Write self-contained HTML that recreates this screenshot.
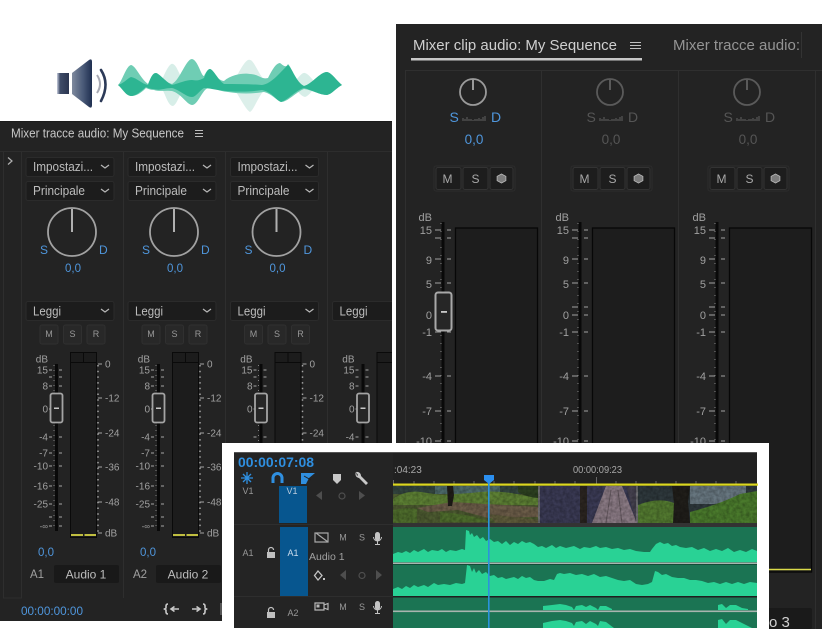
<!DOCTYPE html>
<html><head><meta charset="utf-8"><style>
html,body{margin:0;padding:0;background:#fff;width:822px;height:629px;overflow:hidden}
svg{display:block;position:absolute;left:0;top:0;filter:blur(.3px)}
text{font-family:"Liberation Sans",sans-serif;fill:#bdbdbd;font-size:12px}
.m{text-anchor:middle}.e{text-anchor:end}
.b{fill:#4f96dc}
.t{font-size:10px;fill:#a0a0a0}
.d{fill:#555}
.l{font-size:9px;fill:#989898}
.dt{font-size:13px}
</style></head><body>
<svg width="822" height="629" viewBox="0 0 822 629" xmlns="http://www.w3.org/2000/svg">
<defs>
<filter id="nz" x="0" y="0" width="100%" height="100%"><feTurbulence type="fractalNoise" baseFrequency="0.3" numOctaves="2" seed="4"/><feColorMatrix values="0 0 0 0 0  0 0 0 0 0  0 0 0 0 0  1.6 0 0 0 -0.45"/></filter>
<linearGradient id="cone" x1="0" y1="0" x2="1" y2="0"><stop offset="0" stop-color="#7f8a9e"/><stop offset=".55" stop-color="#4a5a78"/><stop offset="1" stop-color="#1f2f50"/></linearGradient>
<linearGradient id="bx" x1="0" y1="0" x2="1" y2="0"><stop offset="0" stop-color="#c8cede"/><stop offset=".25" stop-color="#3f4c68"/><stop offset="1" stop-color="#2b3550"/></linearGradient>

<g id="dd"><rect x="26" y="0.5" width="88" height="19" rx="2" fill="#1c1c1c" stroke="#2b2b2b"/><path d="M101 8l4 3 4-3" fill="none" stroke="#b8b8b8" stroke-width="1.2"/></g>

<g id="strip">
 <use href="#dd" y="157"/><use href="#dd" y="181"/>
 <circle cx="72" cy="232" r="24" fill="none" stroke="#a2a2a2" stroke-width="1.8"/>
 <rect x="71" y="209" width="2" height="23" fill="#b0b0b0"/>
 <use href="#dd" y="301"/>
 <g fill="#282828" stroke="#303030"><rect x="40" y="325" width="18" height="19" rx="2"/><rect x="63.500" y="325" width="18" height="19" rx="2"/><rect x="87" y="325" width="18" height="19" rx="2"/></g>
 <rect x="55" y="364" width="3" height="167" fill="#090909"/>
 <path d="M49 370h3M49 377h3M49 386h3M49 409h3M49 437h3M49 453h3M49 466h3M49 486h3M49 504h3M49 517h3M49 526h3M59 370h3M59 377h3M59 386h3M59 409h3M59 437h3M59 453h3M59 466h3M59 486h3M59 504h3M59 517h3M59 526h3" stroke="#a4a4a4" stroke-width="1"/>
 <path d="M54 365V528" stroke="#808080" stroke-width="1" stroke-dasharray="1 4"/>
 <rect x="50.500" y="393.500" width="12" height="29" rx="2" fill="#262626" stroke="#a4a4a4" stroke-width="1.800"/>
 <rect x="54" y="407.500" width="5" height="1.500" fill="#c8c8c8"/>
 <rect x="70.500" y="352.500" width="26" height="185" fill="#1c1c1c" stroke="#0a0a0a"/>
 <path d="M71 362.500H96M83.500 352V362" stroke="#0a0a0a" stroke-width="1"/>
 <path d="M71 535H83M84.500 535H96" stroke="#d7d545" stroke-width="1.800"/>
 <path d="M98 365V533" stroke="#a4a4a4" stroke-width="1.500" stroke-dasharray="1.500 4.200"/>
 <path d="M98 364h4M98 398h4M98 433h4M98 467h4M98 502h4M98 533h4" stroke="#a4a4a4"/>
 <rect x="54" y="565" width="65" height="18" rx="2" fill="#191919"/>
</g>

<g id="ticks">
 <path d="M441 223V443" stroke="#888" stroke-dasharray="1 7"/>
 <rect x="441.500" y="222" width="3" height="222" fill="#090909"/>
 <path d="M435 230h6M447 230h4M435 238h6M447 238h4M435 259h6M447 259h4M435 283h6M447 283h4M435 315h6M447 315h4M435 332h6M447 332h4M435 376h6M447 376h4M435 411h6M447 411h4M435 441h6M447 441h4" stroke="#a2a2a2"/>
 <rect x="455.500" y="228" width="82" height="344" fill="#1d1d1d" stroke="#070707" stroke-width="1.300"/>
 <path d="M456 569.500H537" stroke="#dcdc4a" stroke-width="1.500"/>
</g>
<g id="btn3">
 <rect x="434" y="166" width="81" height="25" rx="2" fill="#222" stroke="#2c2c2c"/>
 <g fill="#1d1d1d" stroke="#333"><rect x="436" y="167.500" width="25" height="22" rx="2"/><rect x="463" y="167.500" width="25" height="22" rx="2"/><rect x="490" y="167.500" width="23" height="22" rx="2"/></g>
 <path d="M501.500 174l4.400 2.400v4.200l-4.400 2.400-4.400-2.400v-4.200z" fill="#7c7c7c" stroke="#b8b8b8" stroke-width=".8"/>
</g>
<g id="sdt"><path d="M463 121v-3M465 121v-2M467 121v-4M469 121v-2M471 121v-2M473 121v-1M475 121v-2M477 121v-2M479 121v-3M481 121v-2M483 121v-4M485 121v-5" stroke="#606060" stroke-width="1"/></g>
</defs>

<!-- white page -->
<rect width="822" height="629" fill="#fff"/>

<!-- speaker -->
<rect x="57" y="73" width="12" height="21" fill="url(#bx)"/>
<path d="M72 73L89 60q3-2 3 2V105q0 4-3 2L72 94Z" fill="url(#cone)"/>
<path d="M97 75q6 9 0 18" fill="none" stroke="#a8aab4" stroke-width="2"/>
<path d="M101 70q9 14 0 31" fill="none" stroke="#2c3a58" stroke-width="2.600" stroke-linecap="round"/>

<!-- waveform -->
<path d="M160 85C165 72 170 62 173 64C178 66 180 80 188 85C180 90 178 104 173 106C168 106 166 95 160 85Z" fill="#d7eee8"/>
<path d="M232 85C240 70 246 58 250 60C254 60 258 74 268 85C258 96 254 110 250 112C246 110 240 98 232 85Z" fill="#dcefea"/>
<path d="M292 85C298 78 302 72 305 73C309 74 312 80 318 85C312 90 309 96 305 97C301 96 298 92 292 85Z" fill="#d7eee8"/>
<path d="M118 85C122 82 126 66 131 65C136 66 140 78 148 84C150 80 152 73 156 73C160 74 164 82 172 84C180 80 186 59 192 59C198 60 201 76 204 76C206 72 208 69 210 69C214 70 216 80 224 81C232 74 244 73 250 74C258 74 262 80 268 78C272 70 276 63 280 63C284 66 286 68 288 64C292 68 296 82 304 86C312 84 320 72 327 72C332 73 336 80 342 85C336 88 332 94 327 95C320 95 312 90 304 89C296 92 288 102 281 102C276 100 272 94 264 92C252 94 240 94 228 92C218 91 212 87 208 88C202 90 198 105 192 105C186 104 182 94 172 91C166 90 160 92 154 90C150 90 146 88 146 88C140 94 136 96 131 96C126 96 122 88 118 85Z" fill="#6fcdb4"/>
<path d="M118 85C124 83 128 78 131 77C137 78 142 84 148 85C150 80 152 73 156 73C160 74 166 82 172 85C180 83 186 80 192 80C198 81 200 80 204 78C206 72 208 69 210 69C214 70 218 80 224 84C236 84 250 84 262 85C272 84 282 70 288 65C292 68 296 82 304 86C312 84 320 72 327 72C332 73 336 80 342 85C336 88 332 94 327 95C320 95 312 90 304 88C296 90 288 100 281 102C276 100 272 92 262 90C250 92 236 92 226 91C216 90 208 88 204 88C200 90 196 97 192 97C186 97 180 90 172 88C164 88 160 91 154 89C150 89 148 88 146 87C140 92 136 96 131 96C126 96 122 88 118 85Z" fill="#2db592"/>

<!-- LEFT PANEL -->
<rect x="0" y="121" width="392" height="500" fill="#232323"/>
<rect x="0" y="121" width="392" height="1" fill="#1c1c1c"/>
<path d="M0 151.500H392" stroke="#2d2d2d"/>
<path d="M3.500 152V598H22M21.500 152V598M123.500 152V598M225.500 152V598M327.500 152V598" stroke="#2e2e2e" fill="none"/>
<path d="M8 157.500l4 3.500-4 3.500" fill="none" stroke="#b0b0b0" stroke-width="1.200"/>
<text x="11" y="137.500" style="font-size:12.500px;fill:#c8c8c8" textLength="173" lengthAdjust="spacingAndGlyphs">Mixer tracce audio: My Sequence</text>
<path d="M195 130.500h8M195 133.500h8M195 136.500h8" stroke="#bdbdbd" stroke-width="1"/>

<use href="#strip"/>
<use href="#strip" x="102"/>
<use href="#strip" x="204.500"/>
<clipPath id="c4"><rect x="328" y="152" width="64" height="470"/></clipPath>
<g clip-path="url(#c4)"><g transform="translate(306.500 0)">
 <rect x="26" y="301.500" width="88" height="19" rx="2" fill="#1c1c1c" stroke="#2b2b2b"/>
 <rect x="55" y="364" width="3" height="167" fill="#090909"/>
 <path d="M49 370h3M49 377h3M49 386h3M49 409h3M49 437h3M49 453h3M49 466h3M49 486h3M49 504h3M59 370h3M59 377h3M59 386h3M59 409h3M59 437h3M59 453h3M59 466h3M59 486h3M59 504h3" stroke="#a4a4a4"/>
 <rect x="50.500" y="393.500" width="12" height="29" rx="2" fill="#262626" stroke="#a4a4a4" stroke-width="1.800"/>
 <rect x="54" y="407.500" width="5" height="1.500" fill="#c8c8c8"/>
 <rect x="70.500" y="352.500" width="26" height="185" fill="#1c1c1c" stroke="#0a0a0a"/>
 <path d="M71 362.500H96" stroke="#0a0a0a"/>
 <text class="dt" x="33" y="315.500" textLength="28" lengthAdjust="spacingAndGlyphs">Leggi</text>
 <text class="t e" x="48" y="362.500">dB</text>
 <text class="t e" x="48" y="373.500">15</text><text class="t e" x="48" y="389.500">8</text><text class="t e" x="48" y="412.500">0</text><text class="t e" x="48" y="440.500">-4</text><text class="t e" x="48" y="456.500">-7</text>
</g></g>

<!-- strip texts -->
<g>
<text class="dt" x="33" y="171" textLength="60" lengthAdjust="spacingAndGlyphs">Impostazi...</text><text class="dt" x="33" y="195" textLength="52" lengthAdjust="spacingAndGlyphs">Principale</text>
<text class="b" x="40" y="254" style="font-size:12px">S</text><text class="b" x="99" y="254" style="font-size:12px">D</text><text class="b m" x="73" y="272" style="font-size:11.500px">0,0</text>
<text class="dt" x="33" y="315.500" textLength="28" lengthAdjust="spacingAndGlyphs">Leggi</text>
<text class="l m" x="49" y="337">M</text><text class="l m" x="72.500" y="337">S</text><text class="l m" x="96" y="337">R</text>
<text class="t e" x="48" y="362.500">dB</text><text class="t e" x="48" y="373.500">15</text><text class="t e" x="48" y="389.500">8</text><text class="t e" x="48" y="412.500">0</text><text class="t e" x="48" y="440.500">-4</text><text class="t e" x="48" y="456.500">-7</text><text class="t e" x="48" y="469.500">-10</text><text class="t e" x="48" y="489.500">-16</text><text class="t e" x="48" y="507.500">-25</text><text class="t e" x="48" y="529" style="font-size:8px">-∞</text>
<text class="t" x="105" y="367.500">0</text><text class="t" x="105" y="401.500">-12</text><text class="t" x="105" y="436.500">-24</text><text class="t" x="105" y="470.500">-36</text><text class="t" x="105" y="505.500">-48</text><text class="t" x="105" y="536.500">dB</text>
<text class="b" x="38" y="556" style="font-size:11.500px">0,0</text>
<text x="30" y="578" style="font-size:11.500px;fill:#a0a0a0">A1</text><text class="m" x="86" y="578.500" style="font-size:12px">Audio 1</text>
</g>
<g transform="translate(102 0)">
<text class="dt" x="33" y="171" textLength="60" lengthAdjust="spacingAndGlyphs">Impostazi...</text><text class="dt" x="33" y="195" textLength="52" lengthAdjust="spacingAndGlyphs">Principale</text>
<text class="b" x="40" y="254" style="font-size:12px">S</text><text class="b" x="99" y="254" style="font-size:12px">D</text><text class="b m" x="73" y="272" style="font-size:11.500px">0,0</text>
<text class="dt" x="33" y="315.500" textLength="28" lengthAdjust="spacingAndGlyphs">Leggi</text>
<text class="l m" x="49" y="337">M</text><text class="l m" x="72.500" y="337">S</text><text class="l m" x="96" y="337">R</text>
<text class="t e" x="48" y="362.500">dB</text><text class="t e" x="48" y="373.500">15</text><text class="t e" x="48" y="389.500">8</text><text class="t e" x="48" y="412.500">0</text><text class="t e" x="48" y="440.500">-4</text><text class="t e" x="48" y="456.500">-7</text><text class="t e" x="48" y="469.500">-10</text><text class="t e" x="48" y="489.500">-16</text><text class="t e" x="48" y="507.500">-25</text><text class="t e" x="48" y="529" style="font-size:8px">-∞</text>
<text class="t" x="105" y="367.500">0</text><text class="t" x="105" y="401.500">-12</text><text class="t" x="105" y="436.500">-24</text><text class="t" x="105" y="470.500">-36</text><text class="t" x="105" y="505.500">-48</text><text class="t" x="105" y="536.500">dB</text>
<text class="b" x="38" y="556" style="font-size:11.500px">0,0</text>
<text x="31" y="578" style="font-size:11.500px;fill:#a0a0a0">A2</text><text class="m" x="86" y="578.500" style="font-size:12px">Audio 2</text>
</g>
<g transform="translate(204.500 0)">
<text class="dt" x="33" y="171" textLength="60" lengthAdjust="spacingAndGlyphs">Impostazi...</text><text class="dt" x="33" y="195" textLength="52" lengthAdjust="spacingAndGlyphs">Principale</text>
<text class="b" x="40" y="254" style="font-size:12px">S</text><text class="b" x="99" y="254" style="font-size:12px">D</text><text class="b m" x="73" y="272" style="font-size:11.500px">0,0</text>
<text class="dt" x="33" y="315.500" textLength="28" lengthAdjust="spacingAndGlyphs">Leggi</text>
<text class="l m" x="49" y="337">M</text><text class="l m" x="72.500" y="337">S</text><text class="l m" x="96" y="337">R</text>
<text class="t e" x="48" y="362.500">dB</text><text class="t e" x="48" y="373.500">15</text><text class="t e" x="48" y="389.500">8</text><text class="t e" x="48" y="412.500">0</text>
<text class="t" x="105" y="367.500">0</text><text class="t" x="105" y="401.500">-12</text><text class="t" x="105" y="436.500">-24</text>
</g>
<text class="b" x="21" y="615" style="font-size:11.500px" textLength="62" lengthAdjust="spacingAndGlyphs">00:00:00:00</text>
<path d="M168 604q-2 0-2 2v2l-1.500 1 1.500 1v2q0 2 2 2M171 609h8M174.500 606.500l-3.500 2.500 3.500 2.500M203 604q2 0 2 2v2l1.500 1-1.500 1v2q0 2-2 2M192 609h8M196.500 606.500l3.500 2.500-3.500 2.500" fill="none" stroke="#c8c8c8" stroke-width="1.600"/>
<rect x="220" y="603" width="3" height="12" fill="#555"/>

<!-- RIGHT PANEL -->
<rect x="396" y="24" width="426" height="605" fill="#232323"/>
<text x="413" y="50" style="font-size:14.500px;fill:#cfcfcf" textLength="204" lengthAdjust="spacingAndGlyphs">Mixer clip audio: My Sequence</text>
<path d="M630 42.500h11M630 45.500h11M630 48.500h11" stroke="#c0c0c0" stroke-width="1"/>
<rect x="411" y="58" width="231" height="2.500" fill="#c8c8c8"/>
<text x="673" y="50" style="font-size:14.500px;fill:#949494" textLength="127" lengthAdjust="spacingAndGlyphs">Mixer tracce audio:</text>
<rect x="801" y="32" width="1" height="26" fill="#333"/>
<path d="M405.500 629V70.500H822M541.500 71V629M678.500 71V629M815.500 71V629" fill="none" stroke="#2f2f2f"/>

<circle cx="473" cy="92" r="13" fill="none" stroke="#9a9a9a" stroke-width="1.800"/><rect x="472" y="79" width="2" height="11" fill="#9a9a9a"/>
<circle cx="610" cy="92" r="13" fill="none" stroke="#5a5a5a" stroke-width="1.800"/><rect x="609" y="79" width="2" height="11" fill="#5a5a5a"/>
<circle cx="747" cy="92" r="13" fill="none" stroke="#5a5a5a" stroke-width="1.800"/><rect x="746" y="79" width="2" height="11" fill="#5a5a5a"/>

<use href="#sdt"/><use href="#sdt" x="137"/><use href="#sdt" x="274"/>
<text class="b" x="449.500" y="122" style="font-size:14px">S</text><text class="b" x="491" y="122" style="font-size:14px">D</text><text class="b m" x="474" y="144" style="font-size:13.500px">0,0</text>
<text class="d" x="586.500" y="122" style="font-size:14px">S</text><text class="d" x="628" y="122" style="font-size:14px">D</text><text class="d m" x="611" y="144" style="font-size:13.500px">0,0</text>
<text class="d" x="723.500" y="122" style="font-size:14px">S</text><text class="d" x="765" y="122" style="font-size:14px">D</text><text class="d m" x="748" y="144" style="font-size:13.500px">0,0</text>

<use href="#btn3"/><use href="#btn3" x="137"/><use href="#btn3" x="274"/>
<text class="m" x="447.500" y="183" style="font-size:12px;fill:#a8a8a8">M</text><text class="m" x="475.500" y="183" style="font-size:12px;fill:#a8a8a8">S</text>
<text class="m" x="584.500" y="183" style="font-size:12px;fill:#a8a8a8">M</text><text class="m" x="612.500" y="183" style="font-size:12px;fill:#a8a8a8">S</text>
<text class="m" x="721.500" y="183" style="font-size:12px;fill:#a8a8a8">M</text><text class="m" x="749.500" y="183" style="font-size:12px;fill:#a8a8a8">S</text>

<use href="#ticks"/><use href="#ticks" x="137"/><use href="#ticks" x="274"/>
<path d="M572 307h6M584 307h4M709 307h6M721 307h4" stroke="#a2a2a2"/>
<rect x="435.500" y="292.500" width="16" height="38" rx="2.500" fill="#262626" stroke="#a8a8a8" stroke-width="2"/>
<rect x="441" y="311" width="6" height="1.800" fill="#c8c8c8"/>

<g>
<text class="t e" x="432" y="221" style="font-size:11px">dB</text><text class="t e" x="432" y="234" style="font-size:11px">15</text><text class="t e" x="432" y="264" style="font-size:11px">9</text><text class="t e" x="432" y="288" style="font-size:11px">5</text><text class="t e" x="432" y="319" style="font-size:11px">0</text><text class="t e" x="432" y="336" style="font-size:11px">-1</text><text class="t e" x="432" y="380" style="font-size:11px">-4</text><text class="t e" x="432" y="415" style="font-size:11px">-7</text><text class="t e" x="432" y="445" style="font-size:11px">-10</text>
</g>
<g transform="translate(137 0)">
<text class="t e" x="432" y="221" style="font-size:11px">dB</text><text class="t e" x="432" y="234" style="font-size:11px">15</text><text class="t e" x="432" y="264" style="font-size:11px">9</text><text class="t e" x="432" y="288" style="font-size:11px">5</text><text class="t e" x="432" y="319" style="font-size:11px">0</text><text class="t e" x="432" y="336" style="font-size:11px">-1</text><text class="t e" x="432" y="380" style="font-size:11px">-4</text><text class="t e" x="432" y="415" style="font-size:11px">-7</text><text class="t e" x="432" y="445" style="font-size:11px">-10</text>
</g>
<g transform="translate(274 0)">
<text class="t e" x="432" y="221" style="font-size:11px">dB</text><text class="t e" x="432" y="234" style="font-size:11px">15</text><text class="t e" x="432" y="264" style="font-size:11px">9</text><text class="t e" x="432" y="288" style="font-size:11px">5</text><text class="t e" x="432" y="319" style="font-size:11px">0</text><text class="t e" x="432" y="336" style="font-size:11px">-1</text><text class="t e" x="432" y="380" style="font-size:11px">-4</text><text class="t e" x="432" y="415" style="font-size:11px">-7</text><text class="t e" x="432" y="445" style="font-size:11px">-10</text>
</g>
<rect x="760" y="608" width="52" height="21" rx="2" fill="#1a1a1a"/>
<text x="769" y="627" style="font-size:15px;fill:#d0d0d0">o 3</text>

<!-- TIMELINE -->
<rect x="222" y="443" width="547" height="186" fill="#fff"/>
<rect x="234" y="452" width="523" height="176" fill="#242424"/>
<rect x="234" y="452" width="523" height="1" fill="#555"/>
<rect x="393" y="453" width="364" height="31" fill="#212121"/>
<text x="238" y="467" style="font-size:13.500px;font-weight:bold;fill:#2f8fe0" textLength="76" lengthAdjust="spacingAndGlyphs">00:00:07:08</text>
<!-- toolbar icons -->
<path d="M241 478h12M247 472v12M243 474l8 8M251 474l-8 8" stroke="#2f8fe0" stroke-width="1.300"/>
<path d="M273 483v-5a4.500 4.500 0 0 1 9 0v5" fill="none" stroke="#2f8fe0" stroke-width="3"/>
<path d="M301 473h14l-6 5 -3 6h-5z" fill="#2f8fe0"/><path d="M304 476l7 4" stroke="#202020"/>
<path d="M333 474h8v6l-4 4-4-4z" fill="#c8c8c8"/>
<path d="M356 472a4 4 0 0 0 3 6l7 7 2-2-7-7a4 4 0 0 0-5-4l2 3-1 1z" fill="#c8c8c8"/>
<!-- ruler -->
<text x="394" y="473" style="font-size:10px;fill:#a8a8a8">:04:23</text>
<text x="573" y="473" style="font-size:10px;fill:#a8a8a8" textLength="49" lengthAdjust="spacingAndGlyphs">00:00:09:23</text>
<path d="M393.500 480v4M414 481v3M434 481v3M454 481v3M474 481v3M494 481v3M514 481v3M535 481v3M555 481v3M575 481v3M596.500 477v7M616 481v3M636 481v3M656 481v3M676 481v3M696 481v3M716 481v3M736 481v3" stroke="#666"/>
<!-- video -->
<rect x="393" y="486" width="145" height="37" fill="#4c5a30"/>
<rect x="393" y="486" width="145" height="8" fill="#33453f"/>
<path d="M435 486h65v8h-65z" fill="#4d6a6a"/>
<path d="M393 499q12-9 28-7l20 3 30-2q20-3 40 0l27 5v7H393z" fill="#5d8034"/>
<path d="M417 508l35-6 86 5v10l-50 1-30-8-30 2z" fill="#6b5c48"/>
<path d="M393 510q15-3 24-1v14h-24zM440 512q30 2 50 10h-50z" fill="#4e6c2c"/>
<path d="M488 514l50 6v3h-42z" fill="#5d5a3a"/>
<path d="M447 486h6l1 9-2 11h-4z" fill="#1f1c18"/>
<path d="M518 486h20v12q-12-1-20-6z" fill="#2c4020"/>
<rect x="538" y="486" width="100" height="37" fill="#3a3a54"/>
<path d="M538 486h2v37h-2zM636 486h2v37h-2z" fill="#6e6e72"/>
<rect x="580" y="486" width="7" height="37" fill="#2b2520"/>
<path d="M606 486h16l15 37h-45z" fill="#8a7a84"/>
<path d="M611 490l-5 33M618 490l4 33" stroke="#63575e"/>
<path d="M626 486h10v36z" fill="#45414f"/>
<rect x="638" y="486" width="119" height="37" fill="#2e383c"/>
<path d="M690 486h56v18h-56z" fill="#67767f"/>
<path d="M638 505q20-8 36-2v20h-36z" fill="#537a30"/>
<path d="M690 512q30-8 50-18l17-3v32h-67z" fill="#4a7a2c"/>
<path d="M672 486h18l-2 16 2 21h-17l1-20z" fill="#201e1a"/>
<rect x="393" y="486" width="364" height="37" filter="url(#nz)" opacity=".3"/>
<rect x="393" y="523" width="364" height="4" fill="#333"/>
<rect x="393" y="483.500" width="365" height="2.200" fill="#dcd81f"/>
<!-- header -->
<path d="M234 524.500H393M234 596.500H393" stroke="#2e2e2e"/>
<rect x="279" y="486" width="28" height="37" fill="#07568f"/>
<rect x="280" y="527" width="28" height="69" fill="#07568f"/>
<text class="l m" x="248" y="494">V1</text><text class="l m" x="292" y="494" style="fill:#bcd">V1</text>
<text class="l m" x="248" y="556">A1</text><text class="l m" x="293" y="556" style="fill:#cde">A1</text>
<text class="l m" x="293" y="616">A2</text>
<text x="309" y="560" style="font-size:10.500px;fill:#a0a0a0">Audio 1</text>
<path d="M322 491v9l-6-4.500zM359 491v9l6-4.500z" fill="#4e4e4e"/><circle cx="342" cy="496" r="3" fill="none" stroke="#4e4e4e" stroke-width="1.200"/>
<!-- locks -->
<g fill="#c0c0c0"><rect x="267" y="552" width="8" height="6"/><rect x="267" y="612" width="8" height="6"/></g>
<path d="M268.500 552v-2a2.500 2.500 0 0 1 5 0M268.500 612v-2a2.500 2.500 0 0 1 5 0" fill="none" stroke="#c0c0c0" stroke-width="1.200"/>
<!-- A1 icons -->
<path d="M315 533h13v9h-13zM316 533l12 9" fill="none" stroke="#a8a8a8" stroke-width="1.200"/>
<text class="l m" x="343" y="540.500">M</text><text class="l m" x="362" y="540.500">S</text>
<text class="l m" x="343" y="610">M</text><text class="l m" x="362" y="610">S</text>
<g fill="#c4c4c4"><rect x="375" y="532" width="5" height="9" rx="2.500"/><rect x="375" y="601" width="5" height="9" rx="2.500"/></g>
<path d="M373.500 537a4 4 0 0 0 8 0M377.500 541v3M375 544.500h5M373.500 606a4 4 0 0 0 8 0M377.500 610v3M375 613.500h5" fill="none" stroke="#c4c4c4"/>
<path d="M318 571l4 4.500-4 4.500-3.500-4.500z" fill="none" stroke="#c4c4c4" stroke-width="1.300"/><rect x="323" y="578" width="2" height="2" fill="#c4c4c4"/>
<path d="M346 570v10l-6-5zM376 570l6 5-6 5z" fill="#4e4e4e"/><circle cx="362" cy="575.500" r="3" fill="none" stroke="#4e4e4e" stroke-width="1.200"/>
<path d="M315 603h9v7h-9zM324 605l4-1.500v6l-4-1.500z" fill="none" stroke="#b8b8b8" stroke-width="1.200"/>
<rect x="316.500" y="604.500" width="3" height="3" fill="#b8b8b8"/>

<!-- audio tracks -->
<rect x="393" y="527" width="364" height="101" fill="#1b7453"/>
<path d="M393 562V554L398 552 402 553 406 551 410 553 414 550 418 552 424 549 428 552 432 550 438 551 442 549 446 552 450 550 456 551 462 549 465 550 466 530 469 531 470 535 472 533 474 537 477 535 480 539 483 537 486 541 490 539 494 542 498 541 502 544 506 541 510 545 514 542 518 544 522 541 526 543 530 542 534 544 538 547 542 546 546 548 552 545 556 548 560 546 566 548 570 547 574 546 580 549 584 547 590 548 596 546 600 548 606 547 612 549 618 548 624 550 630 549 636 551 644 552 650 552 652 549 656 544 660 542 664 544 668 543 672 546 676 545 680 547 686 548 692 547 698 550 704 548 710 551 716 549 722 551 728 548 734 552 740 550 746 552 752 549 757 551V562Z" fill="#29d295"/>
<rect x="393" y="562.500" width="364" height="1.600" fill="#a8b5af"/>
<rect x="393" y="564" width="364" height="1" fill="#124d38"/>
<path d="M393 596V589L398 587 402 589 406 586 410 588 414 585 418 587 424 585 428 587 434 583 438 585 444 584 450 585 456 583 462 584 465 583 467 565 470 566 472 572 474 568 476 573 479 570 482 574 486 572 490 576 494 575 498 578 502 577 506 579 510 578 514 577 518 579 522 576 526 578 530 577 534 580 538 581 544 581 550 579 554 580 557 574 560 573 564 574 570 573 576 575 582 574 588 576 594 574 600 577 606 576 612 578 618 580 624 581 630 580 636 584 642 585 648 584 652 582 655 571 658 572 662 575 666 574 672 577 678 578 684 578 690 580 696 580 702 581 708 583 714 582 720 584 726 582 732 584 738 582 744 584 750 582 757 583V596Z" fill="#29d295"/>
<rect x="393" y="596" width="364" height="1.500" fill="#1f1f1f"/>
<path d="M543 610V606L552 605 560 604 566 605 572 607 574 610 576 606 582 605 586 607 590 605 596 608 598 610 600 606 606 606 612 609V610ZM718 610V605L722 604 726 608 730 605 736 605 742 608 748 609V610Z" fill="#29d295"/>
<rect x="393" y="610.500" width="364" height="1.600" fill="#a8b5af"/>
<path d="M543 628V623L552 621 560 620 566 621 572 623 574 626 576 622 582 621 586 624 590 621 596 624 598 626 600 621 606 622 614 628ZM718 628V620L722 619 726 624 730 620 736 620 742 623 752 628Z" fill="#29d295"/>
<!-- playhead -->
<rect x="488" y="480" width="1.600" height="148" fill="#2b93dc"/>
<path d="M484 475h10v5l-5 4-5-4z" fill="#2b8ff0"/>
</svg>
</body></html>
